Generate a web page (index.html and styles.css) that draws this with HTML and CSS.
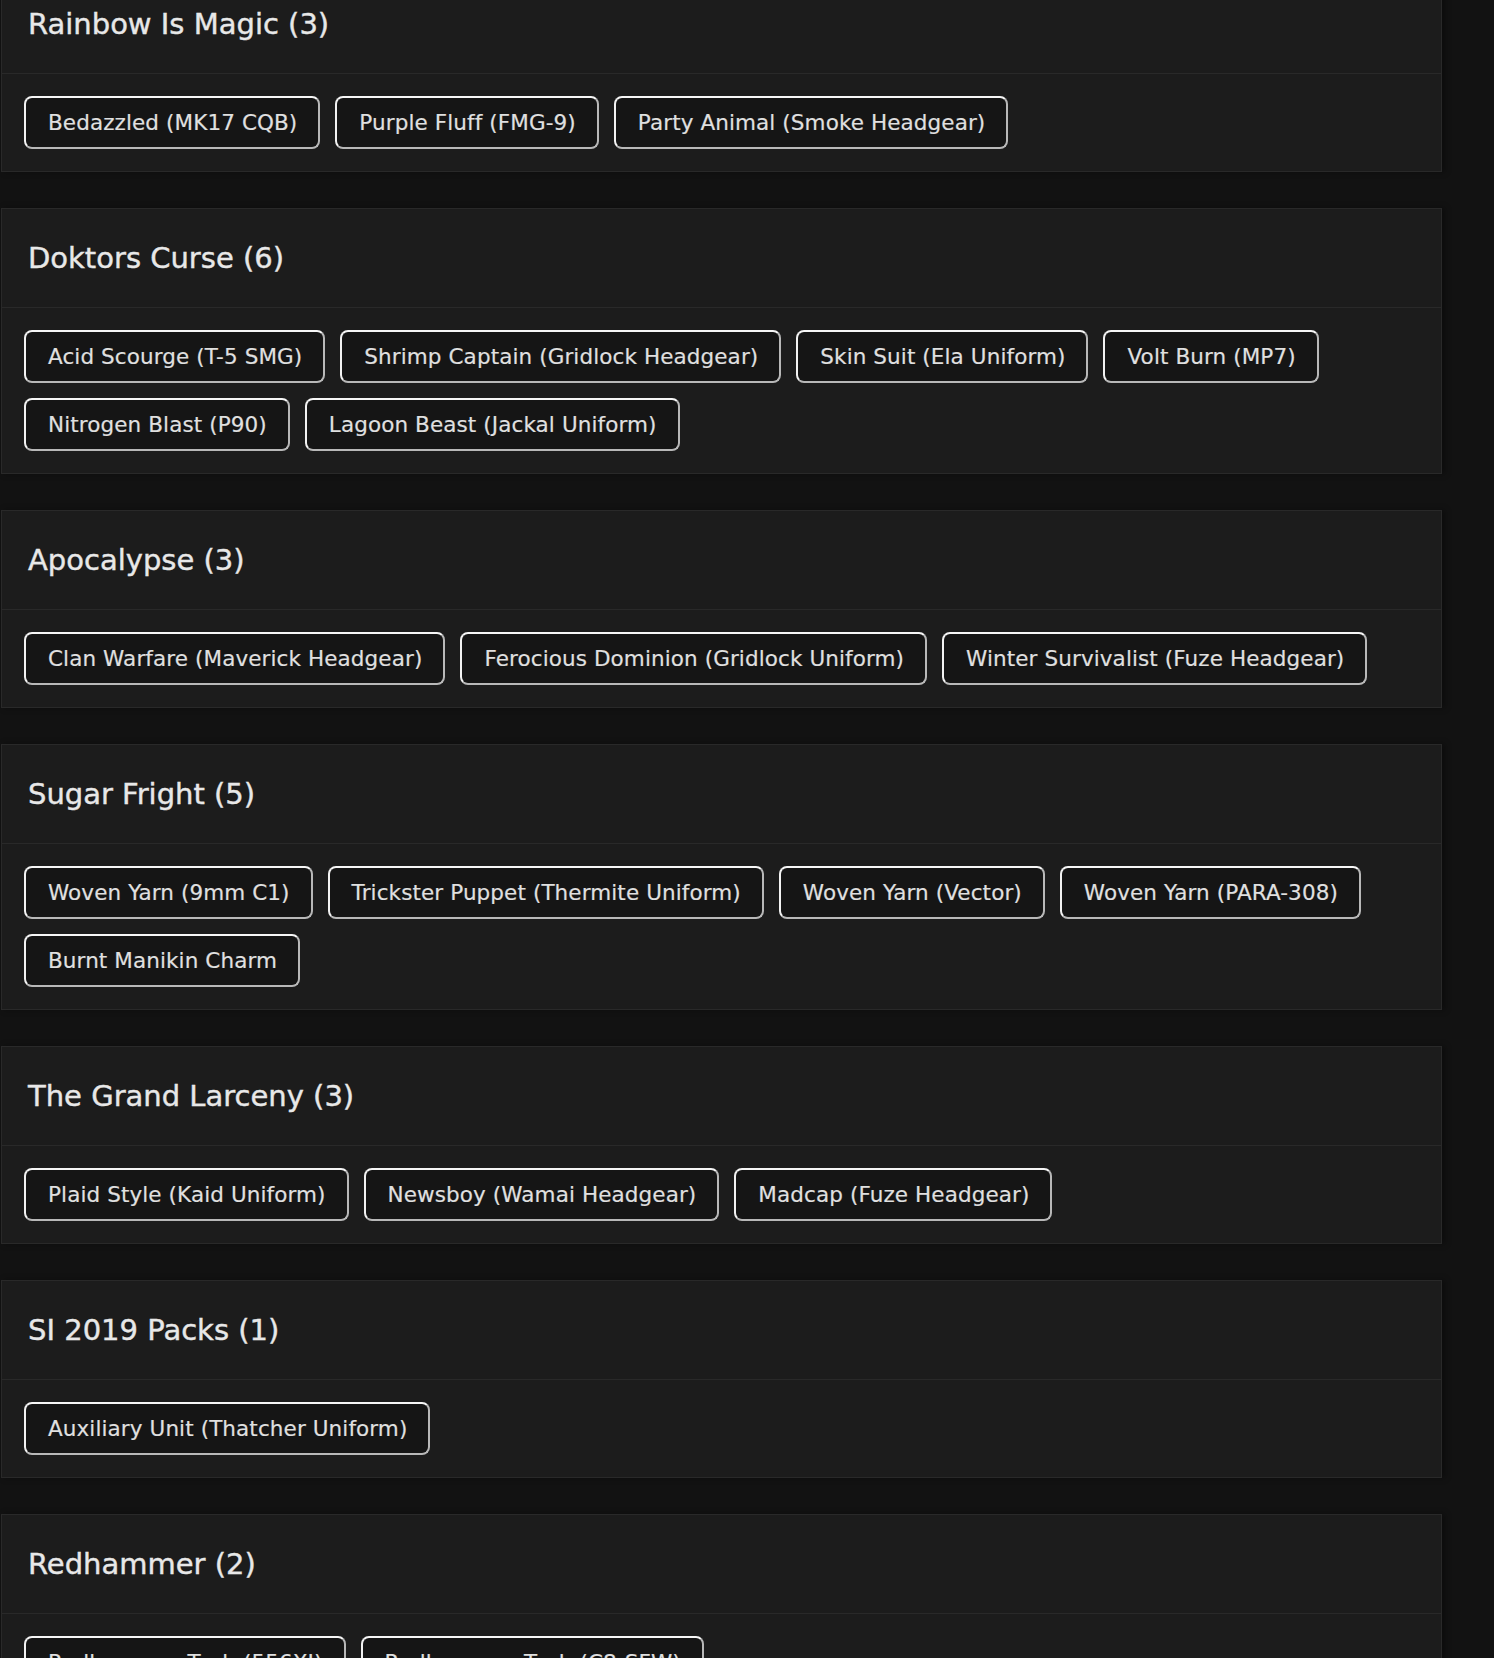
FILE: index.html
```html
<!DOCTYPE html>
<html lang="en">
<head>
<meta charset="utf-8">
<title>Bundles</title>
<link rel="stylesheet" href="styles.css">
</head>
<body>
<main class="list">
  <section class="card">
    <header class="card-head"><h2 class="card-title">Rainbow Is Magic (3)</h2></header>
    <div class="card-body">
      <span class="tag">Bedazzled (MK17 CQB)</span>
      <span class="tag">Purple Fluff (FMG-9)</span>
      <span class="tag">Party Animal (Smoke Headgear)</span>
    </div>
  </section>
  <section class="card">
    <header class="card-head"><h2 class="card-title">Doktors Curse (6)</h2></header>
    <div class="card-body">
      <span class="tag">Acid Scourge (T-5 SMG)</span>
      <span class="tag">Shrimp Captain (Gridlock Headgear)</span>
      <span class="tag">Skin Suit (Ela Uniform)</span>
      <span class="tag">Volt Burn (MP7)</span>
      <span class="tag">Nitrogen Blast (P90)</span>
      <span class="tag">Lagoon Beast (Jackal Uniform)</span>
    </div>
  </section>
  <section class="card">
    <header class="card-head"><h2 class="card-title">Apocalypse (3)</h2></header>
    <div class="card-body">
      <span class="tag">Clan Warfare (Maverick Headgear)</span>
      <span class="tag">Ferocious Dominion (Gridlock Uniform)</span>
      <span class="tag">Winter Survivalist (Fuze Headgear)</span>
    </div>
  </section>
  <section class="card">
    <header class="card-head"><h2 class="card-title">Sugar Fright (5)</h2></header>
    <div class="card-body">
      <span class="tag">Woven Yarn (9mm C1)</span>
      <span class="tag">Trickster Puppet (Thermite Uniform)</span>
      <span class="tag">Woven Yarn (Vector)</span>
      <span class="tag">Woven Yarn (PARA-308)</span>
      <span class="tag">Burnt Manikin Charm</span>
    </div>
  </section>
  <section class="card">
    <header class="card-head"><h2 class="card-title">The Grand Larceny (3)</h2></header>
    <div class="card-body">
      <span class="tag">Plaid Style (Kaid Uniform)</span>
      <span class="tag">Newsboy (Wamai Headgear)</span>
      <span class="tag">Madcap (Fuze Headgear)</span>
    </div>
  </section>
  <section class="card">
    <header class="card-head"><h2 class="card-title">SI 2019 Packs (1)</h2></header>
    <div class="card-body">
      <span class="tag">Auxiliary Unit (Thatcher Uniform)</span>
    </div>
  </section>
  <section class="card">
    <header class="card-head"><h2 class="card-title">Redhammer (2)</h2></header>
    <div class="card-body">
      <span class="tag">Redhammer Tech (556XI)</span>
      <span class="tag">Redhammer Tech (C8-SFW)</span>
    </div>
  </section>
</main>
</body>
</html>
```

FILE: styles.css
```css
html, body {
  margin: 0;
  padding: 0;
  background: #121212;
}

body {
  font-family: "DejaVu Sans", "Liberation Sans", sans-serif;
  color: #e2e2e2;
  overflow: hidden;
  height: 1658px;
}

.list {
  width: 1441px;
  margin: -26px 0 0 1px;
  display: flex;
  flex-direction: column;
  gap: 36px;
}

.card {
  background: #1c1c1c;
  border: 1px solid #292929;
  box-shadow: 3px 0 6px rgba(0, 0, 0, 0.35);
}

.card-head {
  height: 98px;
  display: flex;
  align-items: center;
  padding: 0 26px;
  border-bottom: 1px solid #292929;
}

.card-title {
  margin: 0;
  font-size: 29px;
  font-weight: 400;
  color: #e8e8e8;
  letter-spacing: 0;
  -webkit-text-stroke: 0.4px #e8e8e8;
}

.card-body {
  display: flex;
  flex-wrap: wrap;
  gap: 15px 15px;
  padding: 22px 22px 22px 22px;
}

.tag {
  box-sizing: border-box;
  height: 53px;
  display: inline-flex;
  align-items: center;
  padding: 0 21px 0 22px;
  font-size: 21.5px;
  letter-spacing: 0.1px;
  color: #e0e0e0;
  -webkit-text-stroke: 0.15px #e0e0e0;
  background: #151515;
  border: 2px solid;
  border-color: #f6f6f6 #b8b8b8 #b8b8b8 #f2f2f2;
  border-radius: 8px;
  white-space: nowrap;
}
```
